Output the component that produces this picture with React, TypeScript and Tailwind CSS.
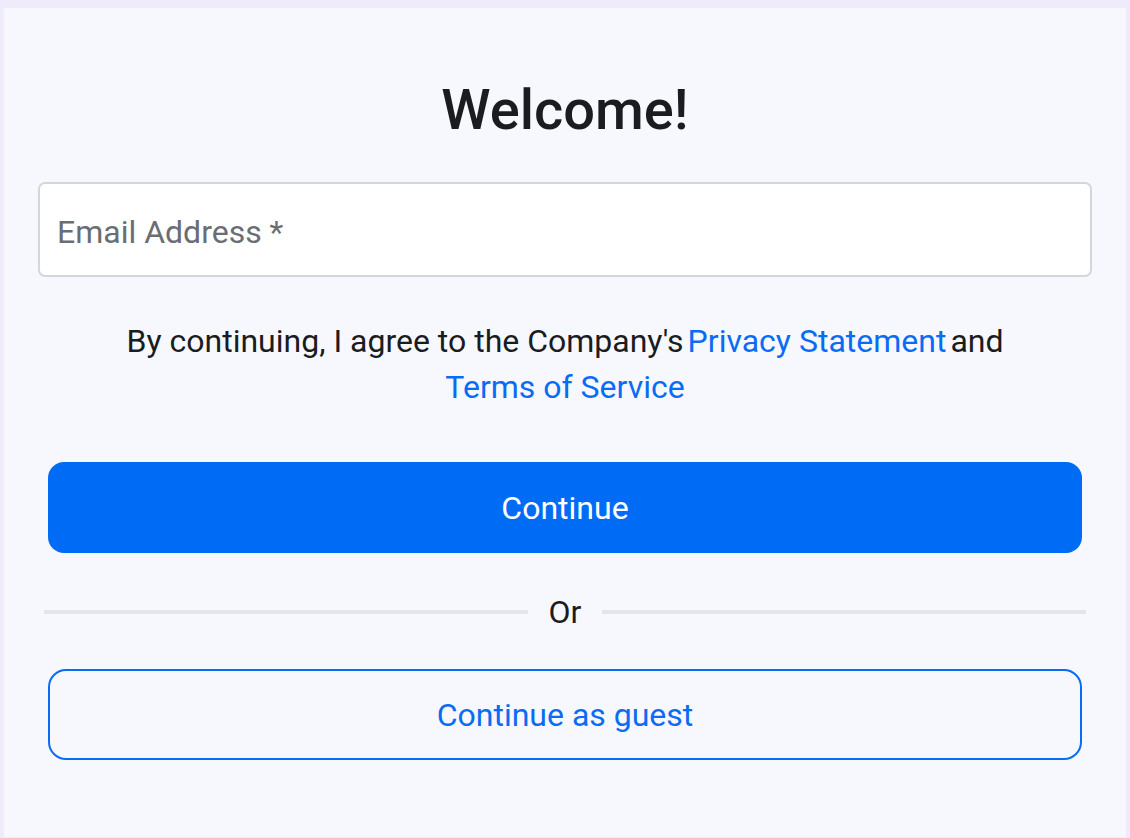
import React from "react";

export default function App() {
  return (
    <div className="min-h-screen bg-[#efebfb] pt-2 px-1 font-['Roboto',sans-serif]">
      <div className="h-[829px] bg-[#f7f8fe] px-[34px] pt-[70px]">
        <h1 className="text-center text-[56px] leading-[64px] font-medium text-[#1b1c1f]">Welcome!</h1>

        <input
          type="email"
          placeholder="Email Address *"
          className="mt-[40px] block h-[95px] w-full rounded-[7px] border-2 border-[#d4d6dc] bg-white px-[17px] pt-[4px] text-[32px] text-[#1b1c1f] placeholder:text-[#6a6e74] outline-none"
        />

        <p className="mt-[41px] text-center text-[32px] leading-[46px] text-[#1b1c1f]">
          By continuing, I agree to the Company's
          <a className="mx-[4px] inline-block whitespace-nowrap text-[#0a6cf5]">Privacy Statement</a>
          and{" "}
          <a className="inline-block whitespace-nowrap text-[#0a6cf5]">Terms of Service</a>
        </p>

        <div className="mx-[10px] mt-[52px]">
          <button className="flex h-[91px] w-full items-center justify-center rounded-[16px] bg-[#006bf5] text-[32px] text-white">
            Continue
          </button>
        </div>

        <div className="mx-[6px] mt-[39px] flex h-[40px] items-center gap-[21px]">
          <div className="h-[4px] flex-1 bg-[#e3e5ea]" />
          <span className="text-[32px] text-[#1b1c1f]">Or</span>
          <div className="h-[4px] flex-1 bg-[#e3e5ea]" />
        </div>

        <div className="mx-[10px] mt-[37px]">
          <button className="flex h-[91px] w-full items-center justify-center rounded-[18px] border-2 border-[#0a6cf5] text-[32px] text-[#0a6cf5]">
            Continue as guest
          </button>
        </div>
      </div>
    </div>
  );
}
